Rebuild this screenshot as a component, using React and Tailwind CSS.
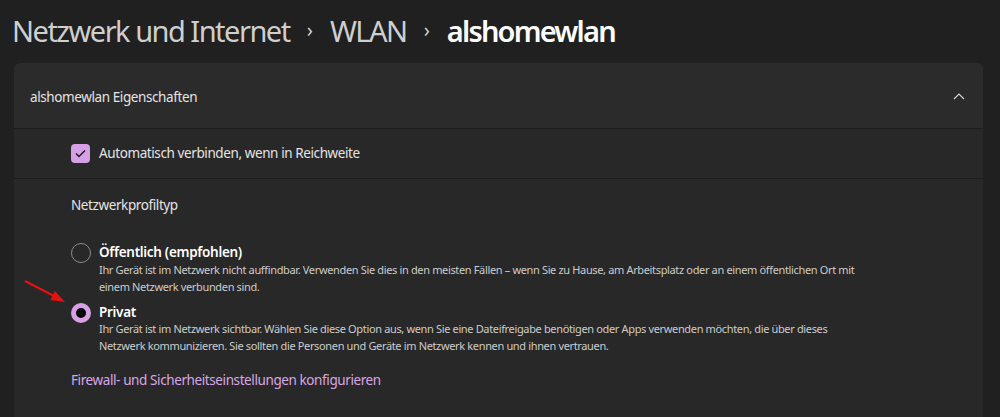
import React from "react";

const font = { fontFamily: '"Noto Sans", "Open Sans", sans-serif' };

export default function App() {
  return (
    <div className="w-[1000px] h-[417px] overflow-hidden bg-[#202020] text-white" style={font}>
      <div className="flex items-center h-[60px] pl-[12px] text-[29px] leading-none tracking-[-1.5px]">
        <span className="text-[#cfcfcf]">Netzwerk und Internet</span>
        <span className="text-[#cfcfcf] text-[20px] mx-[17px] tracking-normal">›</span>
        <span className="text-[#cfcfcf]">WLAN</span>
        <span className="text-[#cfcfcf] text-[20px] mx-[17px] tracking-normal">›</span>
        <span className="text-white font-semibold tracking-[-1.8px]">alshomewlan</span>
      </div>
      <div className="ml-[14px] mt-[3px] w-[969px] rounded-t-[6px] overflow-hidden">
        <div className="flex items-center justify-between h-[65px] bg-[#2b2b2b] pl-[16px] pr-[18px]">
          <span className="mt-[4px] text-[13.5px] tracking-[-0.4px] text-[#e4e4e4]">alshomewlan Eigenschaften</span>
          <svg width="12" height="8" viewBox="0 0 12 8" fill="none">
            <path d="M1 7 L6 2 L11 7" stroke="#d0d0d0" strokeWidth="1.2" />
          </svg>
        </div>
        <div className="h-[1px] bg-[#1d1d1d]" />
        <div className="flex items-center h-[49px] bg-[#282828] pl-[57px]">
          <div className="w-[19px] h-[19px] rounded-[4px] bg-[#d69fe6] flex items-center justify-center">
            <svg width="11" height="9" viewBox="0 0 11 9" fill="none">
              <path d="M1 4.5 L4 7.5 L10 1.5" stroke="#1a1a1a" strokeWidth="1.4" />
            </svg>
          </div>
          <span className="ml-[9px] text-[13.5px] tracking-[-0.4px] text-[#e4e4e4]">Automatisch verbinden, wenn in Reichweite</span>
        </div>
        <div className="h-[1px] bg-[#1d1d1d]" />
        <div className="bg-[#282828] pl-[57px] pt-[16px] pb-[40px] relative">
          <div className="text-[13.5px] tracking-[-0.4px] text-[#e4e4e4] leading-[20px]">Netzwerkprofiltyp</div>
          <div className="flex items-start mt-[29px]">
            <div className="w-[20px] h-[20px] mt-[-1px] rounded-full border border-[#8c8c8c] shrink-0" />
            <div className="ml-[8px]">
              <div className="text-[13.5px] tracking-[-0.3px] font-semibold text-white leading-[17px]">Öffentlich (empfohlen)</div>
              <div className="text-[11px] tracking-[-0.35px] text-[#cccccc] leading-[17px] whitespace-nowrap">
                Ihr Gerät ist im Netzwerk nicht auffindbar. Verwenden Sie dies in den meisten Fällen – wenn Sie zu Hause, am Arbeitsplatz oder an einem öffentlichen Ort mit
                <br />
                einem Netzwerk verbunden sind.
              </div>
            </div>
          </div>
          <div className="flex items-start mt-[9px]">
            <div className="w-[20px] h-[20px] mt-[-1px] rounded-full bg-[#d69fe6] flex items-center justify-center shrink-0">
              <div className="w-[10px] h-[10px] rounded-full bg-black" />
            </div>
            <div className="ml-[8px]">
              <div className="text-[13.5px] tracking-[-0.3px] font-semibold text-white leading-[17px]">Privat</div>
              <div className="text-[11px] tracking-[-0.35px] text-[#cccccc] leading-[16.5px] whitespace-nowrap">
                Ihr Gerät ist im Netzwerk sichtbar. Wählen Sie diese Option aus, wenn Sie eine Dateifreigabe benötigen oder Apps verwenden möchten, die über dieses
                <br />
                Netzwerk kommunizieren. Sie sollten die Personen und Geräte im Netzwerk kennen und ihnen vertrauen.
              </div>
            </div>
          </div>
          <div className="mt-[16px] text-[13.5px] tracking-[-0.4px] text-[#d8a6e6] leading-[20px]">Firewall- und Sicherheitseinstellungen konfigurieren</div>
          <svg className="absolute left-[8px] top-[100px]" width="48" height="28" viewBox="0 0 48 28">
            <line x1="3" y1="2" x2="32" y2="17" stroke="#e81010" strokeWidth="2" />
            <path d="M43 23 L28.3 20.9 L32.9 12.1 Z" fill="#e81010" />
          </svg>
        </div>
      </div>
    </div>
  );
}
